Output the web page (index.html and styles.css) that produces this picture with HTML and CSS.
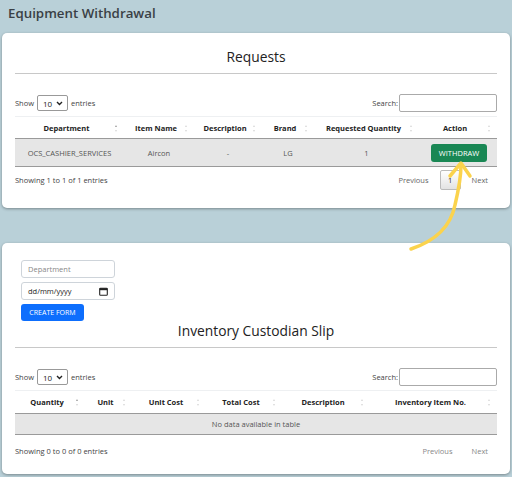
FILE: index.html
```html
<!DOCTYPE html>
<html>
<head>
<meta charset="utf-8">
<link rel="stylesheet" href="styles.css">
</head>
<body>
<h1 class="page-title">Equipment Withdrawal</h1>

<section class="card card-requests">
  <h2 class="card-title">Requests</h2>
  <hr class="rule">
  <div class="controls">
    <label class="length">Show <span class="select">10 <svg width="7" height="5" viewBox="0 0 7 5"><path d="M1 1 L3.5 3.5 L6 1" fill="none" stroke="#222" stroke-width="1.4"/></svg></span> entries</label>
    <label class="search">Search: <span class="search-input"></span></label>
  </div>
  <table class="dt dt-req">
    <colgroup><col style="width:109px"><col style="width:70px"><col style="width:68px"><col style="width:52px"><col style="width:105px"><col style="width:78px"></colgroup>
    <thead>
      <tr>
        <th><span class="th-text">Department</span><span class="sort sort-asc"></span></th>
        <th><span class="th-text">Item Name</span><span class="sort"></span></th>
        <th><span class="th-text">Description</span><span class="sort"></span></th>
        <th><span class="th-text">Brand</span><span class="sort"></span></th>
        <th><span class="th-text">Requested Quantity</span><span class="sort"></span></th>
        <th><span class="th-text">Action</span><span class="sort"></span></th>
      </tr>
    </thead>
    <tbody>
      <tr class="row">
        <td>OCS_CASHIER_SERVICES</td>
        <td>Aircon</td>
        <td>-</td>
        <td>LG</td>
        <td>1</td>
        <td><button class="btn-withdraw">WITHDRAW</button></td>
      </tr>
    </tbody>
  </table>
  <div class="footer">
    <span class="info">Showing 1 to 1 of 1 entries</span>
    <div class="pager">
      <span class="pg">Previous</span>
      <span class="pg pg-current">1</span>
      <span class="pg">Next</span>
    </div>
  </div>
</section>

<section class="card card-slip">
  <div class="form">
    <div class="field placeholder">Department</div>
    <div class="field date">dd/mm/yyyy <svg width="9" height="9" viewBox="0 0 9 9"><rect x="0.7" y="1.2" width="7.6" height="7" rx="0.8" fill="none" stroke="#222" stroke-width="1.1"/><rect x="0.7" y="1.2" width="7.6" height="2" fill="#222"/></svg></div>
    <button class="btn-create">CREATE FORM</button>
  </div>
  <h2 class="card-title slip-title">Inventory Custodian Slip</h2>
  <hr class="rule">
  <div class="controls">
    <label class="length">Show <span class="select">10 <svg width="7" height="5" viewBox="0 0 7 5"><path d="M1 1 L3.5 3.5 L6 1" fill="none" stroke="#222" stroke-width="1.4"/></svg></span> entries</label>
    <label class="search">Search: <span class="search-input"></span></label>
  </div>
  <table class="dt dt-slip">
    <colgroup><col style="width:70px"><col style="width:47px"><col style="width:74px"><col style="width:76px"><col style="width:88px"><col style="width:127px"></colgroup>
    <thead>
      <tr>
        <th><span class="th-text">Quantity</span><span class="sort sort-asc"></span></th>
        <th><span class="th-text">Unit</span><span class="sort"></span></th>
        <th><span class="th-text">Unit Cost</span><span class="sort"></span></th>
        <th><span class="th-text">Total Cost</span><span class="sort"></span></th>
        <th><span class="th-text">Description</span><span class="sort"></span></th>
        <th><span class="th-text">Inventory Item No.</span><span class="sort"></span></th>
      </tr>
    </thead>
    <tbody>
      <tr class="row empty">
        <td colspan="6">No data available in table</td>
      </tr>
    </tbody>
  </table>
  <div class="footer">
    <span class="info">Showing 0 to 0 of 0 entries</span>
    <div class="pager pager-slip">
      <span class="pg pg-disabled">Previous</span>
      <span class="pg pg-disabled">Next</span>
    </div>
  </div>
</section>

<svg class="arrow" width="80" height="110" viewBox="400 150 80 110">
  <path d="M411 249 C 432 242, 450 230, 455 205 C 459 188, 461 176, 461 165" fill="none" stroke="#fbd34d" stroke-width="3.5" stroke-linecap="round"/>
  <path d="M450 176 L461 163 L470 176" fill="none" stroke="#fbd34d" stroke-width="3.5" stroke-linecap="round" stroke-linejoin="round"/>
</svg>
</body>
</html>
```

FILE: styles.css
```css
* { box-sizing: border-box; }
html, body { margin: 0; padding: 0; }
body {
  position: relative;
  width: 512px;
  height: 477px;
  overflow: hidden;
  background: #b9d0d8;
  font-family: "Open Sans", "Noto Sans", sans-serif;
  color: #333;
}
.page-title {
  margin: 0;
  padding: 4px 0 0 8px;
  height: 33px;
  font-size: 13.3px;
  font-weight: 600;
  color: #3a3f45;
  letter-spacing: 0;
}
.card {
  margin-left: 2px;
  width: 508px;
  background: #fff;
  border-radius: 5px;
  box-shadow: 0 1px 3px rgba(0,0,0,0.35);
  padding: 0 13px;
}
.card-requests { height: 175px; padding-top: 13px; }
.card-slip { margin-top: 35px; height: 231px; padding-top: 17px; }
.card-title {
  margin: 0;
  text-align: center;
  font-size: 13.8px;
  font-weight: 400;
  color: #222;
  line-height: 22px;
}
.rule {
  margin: 5px 0 0 0;
  border: 0;
  border-top: 1px solid #c8c8c8;
  height: 0;
}
.controls {
  display: flex;
  justify-content: space-between;
  align-items: center;
  margin-top: 20px;
  height: 18px;
  font-size: 7.5px;
  color: #444;
}
.length { display: flex; align-items: center; gap: 3px; }
.select {
  display: inline-flex;
  align-items: center;
  justify-content: space-between;
  width: 31px;
  height: 16px;
  padding: 0 4px 0 5px;
  border: 1px solid #999;
  border-radius: 2px;
  color: #222;
  font-size: 8px;
}
.search { display: flex; align-items: center; gap: 1px; }
.search-input {
  display: inline-block;
  width: 98px;
  height: 18px;
  border: 1px solid #aaa;
  border-radius: 2px;
}
.dt {
  width: 482px;
  margin-top: 4px;
  border-collapse: collapse;
  table-layout: fixed;
  font-size: 7.5px;
}
.dt th {
  position: relative;
  height: 22px;
  padding: 0 10px 0 4px;
  font-weight: 700;
  color: #222;
  text-align: center;
  border-top: 1px solid #eef0f2;
  border-bottom: 1px solid #9a9a9a;
  white-space: nowrap;
}
.dt-slip th { height: 23px; }
.sort {
  position: absolute;
  right: 6px;
  top: 8px;
  width: 3px;
  height: 7px;
}
.sort::before, .sort::after {
  content: "";
  position: absolute;
  left: 0;
  width: 0; height: 0;
  border-left: 1.5px solid transparent;
  border-right: 1.5px solid transparent;
}
.sort::before { top: 0; border-bottom: 2px solid #d8d8d8; }
.sort::after { bottom: 0; border-top: 2px solid #d8d8d8; }
.sort-asc::before { border-bottom-color: #9a9a9a; }
.dt td {
  text-align: center;
  color: #555;
  padding: 0 4px;
  white-space: nowrap;
}
.row { background: #e6e6e6; height: 28px; border-bottom: 1px solid #9a9a9a; }
.row.empty { height: 21px; }
.btn-withdraw {
  margin-left: 2px;
  width: 56px;
  height: 18px;
  border: 0;
  border-radius: 3px;
  background: #198754;
  color: #fff;
  font-family: inherit;
  font-size: 7.5px;
  padding: 0;
}
.footer {
  display: flex;
  justify-content: space-between;
  align-items: center;
  margin-top: 3px;
  height: 20px;
  font-size: 7.5px;
  color: #444;
}
.card-slip .footer { margin-top: 6px; }
.pager { display: flex; align-items: center; gap: 11px; padding-right: 9px; }
.pager-slip { gap: 19px; }
.pg { color: #666; }
.pg-current {
  display: inline-flex;
  align-items: center;
  justify-content: center;
  width: 21px;
  height: 20px;
  border: 1px solid #bbb;
  border-radius: 2px;
  background: linear-gradient(#fff, #e3e3e3);
  color: #333;
}
.pg-disabled { color: #888; }
.form {
  display: flex;
  flex-direction: column;
  gap: 4px;
  padding-left: 6px;
  align-items: flex-start;
}
.field {
  display: flex;
  align-items: center;
  justify-content: space-between;
  width: 94px;
  height: 18px;
  border: 1px solid #ced4da;
  border-radius: 3px;
  padding: 0 6px 0 6px;
  font-size: 7.5px;
  color: #222;
}
.field.placeholder { color: #888; }
.btn-create {
  width: 63px;
  height: 17px;
  border: 0;
  border-radius: 3px;
  background: #0d6efd;
  color: #fff;
  font-family: inherit;
  font-size: 7px;
  padding: 0;
}
.slip-title { margin-top: -1px; }
.arrow {
  position: absolute;
  left: 400px;
  top: 150px;
}
```
